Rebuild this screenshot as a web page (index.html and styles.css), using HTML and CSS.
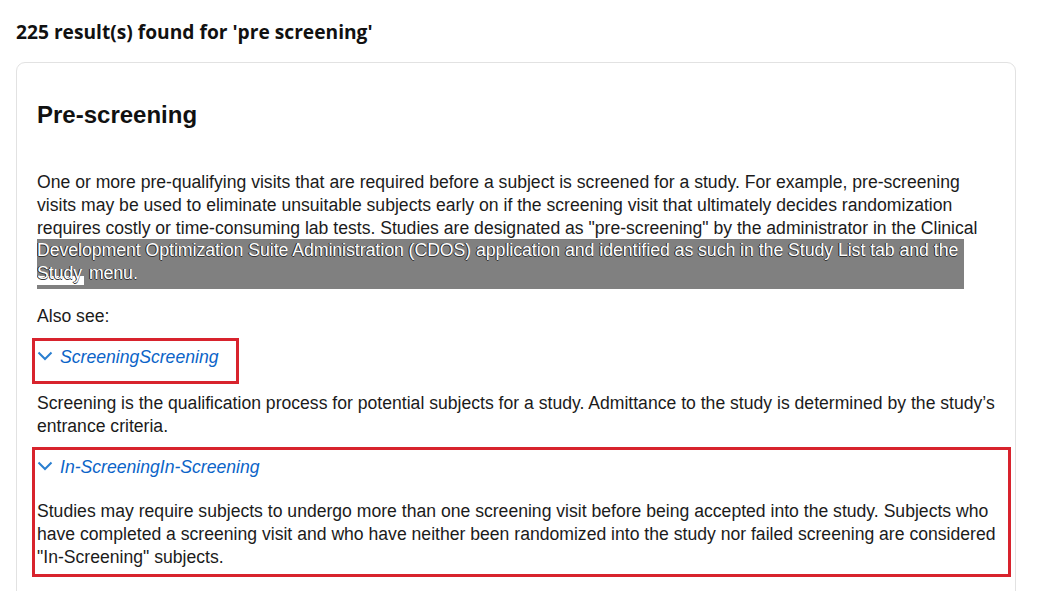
FILE: index.html
```html
<!DOCTYPE html>
<html lang="en">
<head>
<meta charset="utf-8">
<title>Search results</title>
<link rel="stylesheet" href="styles.css">
</head>
<body>
<h1 class="results-title">225 result(s) found for 'pre screening'</h1>
<div class="card">
  <h2 class="term-title">Pre-screening</h2>
  <p class="body-text first">One or more pre-qualifying visits that are required before a subject is screened for a study. For example, pre-screening visits may be used to eliminate unsuitable subjects early on if the screening visit that ultimately decides randomization requires costly or time-consuming lab tests. Studies are designated as "pre-screening" by the administrator in the Clinical</p>
  <div class="gray-block"><span class="gline">Development Optimization Suite Administration (CDOS) application and identified as such in the Study List tab and the</span><span class="gline"><span class="white-patch">Study</span> menu.</span></div>
  <p class="body-text also">Also see:</p>
  <div class="mark mark-link">
    <a class="term-link" href="#"><svg class="chev" width="16" height="10" viewBox="0 0 16 10"><path d="M1.5 1.5 L8 8 L14.5 1.5" fill="none" stroke="#2a7fd0" stroke-width="2"/></svg><span>ScreeningScreening</span></a>
  </div>
  <p class="body-text def">Screening is the qualification process for potential subjects for a study. Admittance to the study is determined by the study’s entrance criteria.</p>
  <div class="mark mark-block">
    <a class="term-link" href="#"><svg class="chev" width="16" height="10" viewBox="0 0 16 10"><path d="M1.5 1.5 L8 8 L14.5 1.5" fill="none" stroke="#2a7fd0" stroke-width="2"/></svg><span>In-ScreeningIn-Screening</span></a>
    <p class="body-text inner">Studies may require subjects to undergo more than one screening visit before being accepted into the study. Subjects who have completed a screening visit and who have neither been randomized into the study nor failed screening are considered "In-Screening" subjects.</p>
  </div>
</div>
</body>
</html>
```

FILE: styles.css
```css
html, body {
  margin: 0;
  padding: 0;
  background: #ffffff;
  overflow: hidden;
}
body {
  padding: 20px 25px 0 16px;
  font-family: "Liberation Sans", Arial, sans-serif;
  color: #1b1b1b;
}
.results-title {
  margin: 0;
  font-family: "Open Sans", "Noto Sans", sans-serif;
  font-weight: 700;
  font-size: 19.2px;
  line-height: 24px;
  color: #111;
}
.card {
  margin-top: 18px;
  border: 1px solid #e2e2e2;
  border-radius: 9px;
  padding: 38px 19px 40px 20px;
  height: 600px;
}
.term-title {
  margin: 0;
  font-size: 24px;
  line-height: 27px;
  font-weight: 700;
  color: #111;
}
.body-text {
  margin: 0;
  font-size: 17.6px;
  line-height: 23px;
  width: 962px;
}
.first {
  margin-top: 43px;
}
.gray-block {
  width: 927px;
  background: #808080;
  color: #ffffff;
  font-size: 17.6px;
  line-height: 23px;
  padding-bottom: 4px;
  margin-top: -1px;
  text-shadow: -1px 0 0 #1a1a1a, 0 1px 0 #333;
}
.gline {
  display: block;
  overflow: hidden;
  white-space: nowrap;
}
.white-patch {
  display: inline-block;
  background: linear-gradient(to bottom, transparent 0, transparent 60%, #ffffff 60%, #ffffff 100%);
  padding-right: 2px;
}
.also {
  margin-top: 16px;
}
.mark {
  border: 3px solid #d8232d;
  box-sizing: border-box;
}
.mark-link {
  width: 207px;
  margin-top: 10px;
  margin-left: -5px;
  padding: 5px 0 12px 2px;
}
.mark-block {
  width: 979px;
  margin-left: -5px;
  margin-top: 9px;
  padding: 6px 0 5px 2px;
}
.term-link {
  display: flex;
  align-items: center;
  gap: 7px;
  font-style: italic;
  font-size: 17.6px;
  line-height: 23px;
  color: #0b64c8;
  text-decoration: none;
}
.chev {
  display: block;
  margin-top: -3px;
}
.def {
  margin-top: 8px;
}
.inner {
  margin-top: 21px;
}
```
